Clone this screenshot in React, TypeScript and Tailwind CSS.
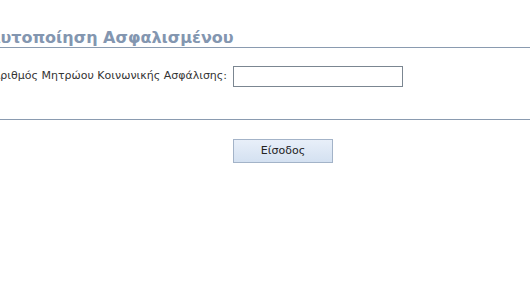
import React from "react";

export default function App() {
  return (
    <div
      className="w-[530px] h-[301px] bg-white overflow-hidden"
      style={{ fontFamily: '"DejaVu Sans", Verdana, sans-serif' }}
    >
      <div className="pt-[29px] pb-[1px] border-b border-[#8a9bb0]">
        <h1 className="-ml-[12px] text-[16px] leading-[17px] font-bold text-[#8396b0] whitespace-nowrap">
          Αυτοποίηση Ασφαλισμένου
        </h1>
      </div>
      <div className="mt-[18px] flex items-center">
        <div className="w-[227px] shrink-0 flex justify-end">
          <label className="whitespace-nowrap shrink-0 text-[11px] text-[#333]">
            Αριθμός Μητρώου Κοινωνικής Ασφάλισης:
          </label>
        </div>
        <input
          type="text"
          className="ml-[6px] w-[170px] h-[21px] border border-[#7b8691] bg-white outline-none"
        />
      </div>
      <div className="mt-[32px] border-t border-[#8a9bb0]" />
      <div className="mt-[17px] pl-[233px]">
        <button className="w-[100px] h-[24px] border border-[#a3b3c8] bg-gradient-to-b from-[#e8eff9] to-[#d4e1f1] text-[11px] text-[#222]">
          Είσοδος
        </button>
      </div>
    </div>
  );
}
